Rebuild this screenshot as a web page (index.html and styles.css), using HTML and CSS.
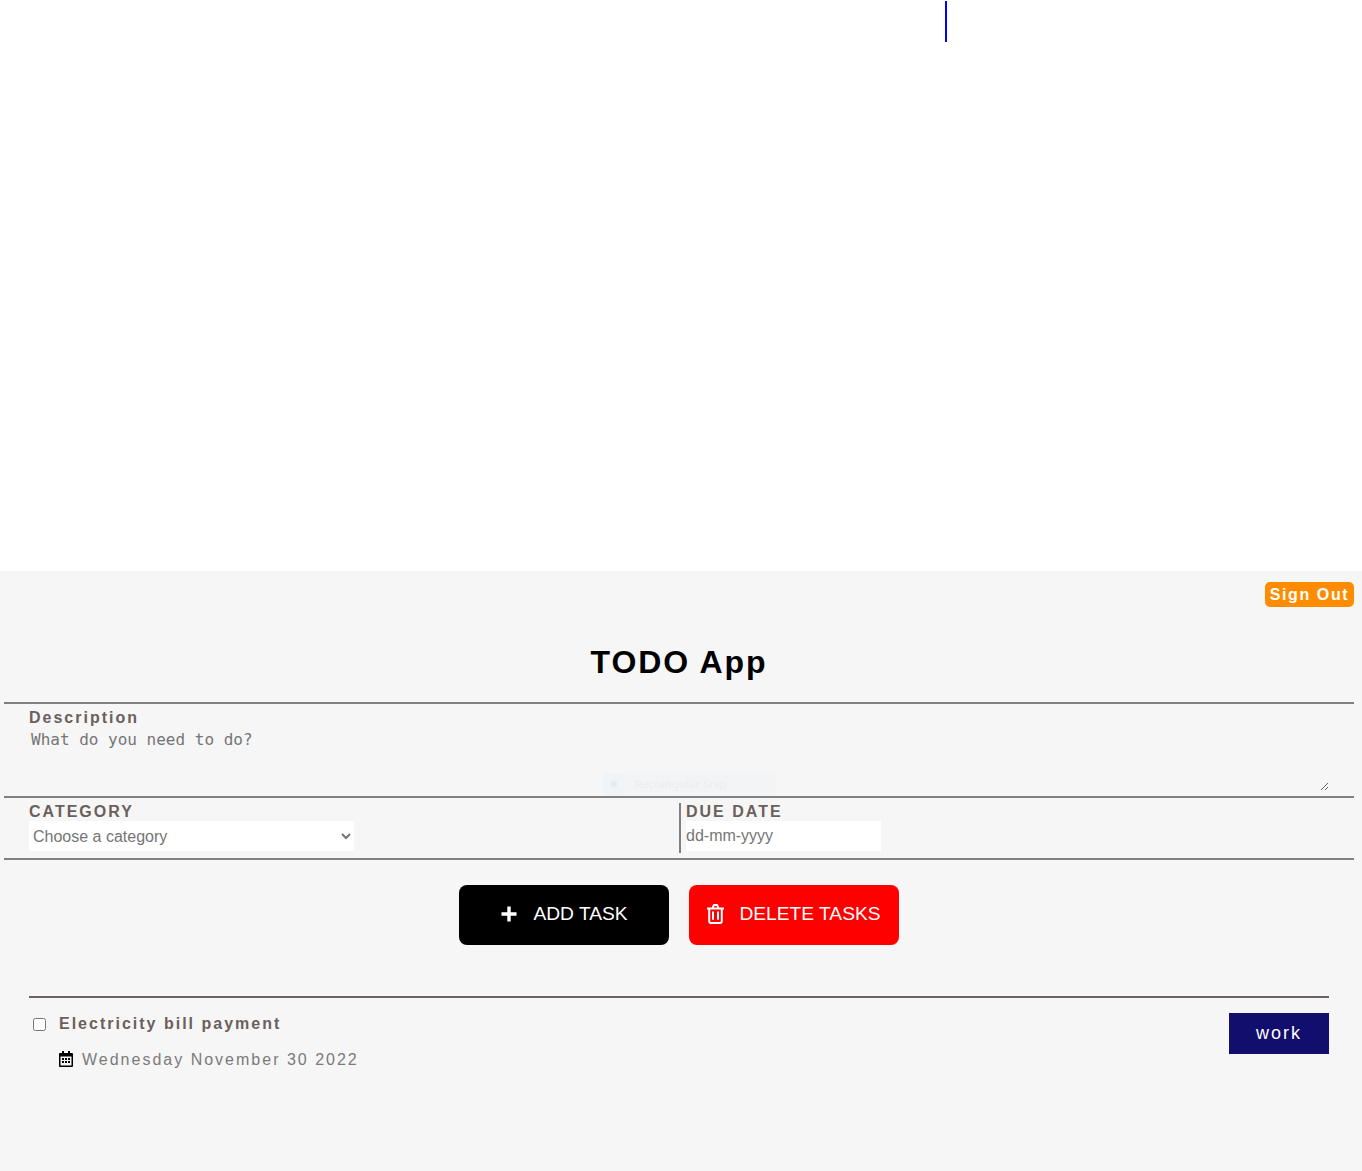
FILE: index.html
```html
<!DOCTYPE html>
<html lang="en">
<head>
    <meta charset="UTF-8">
    <meta name="viewport" content="width=device-width, initial-scale=1.0">
    <title>TODO App</title>
    <link rel="stylesheet" href="styles.css">
</head>
<body>
    <!-- empty area above the app -->
    <div class="blank-area">
        <div class="caret-line"></div>
    </div>

    <div class="app">
        <div class="top-bar">
            <button class="signout-btn">Sign Out</button>
        </div>

        <h1 class="app-title">TODO App</h1>

        <div class="field description-field">
            <label class="field-label">Description</label>
            <textarea class="description-input" placeholder="What do you need to do?"></textarea>
            <div class="snip-ghost">
                <span class="snip-icon"><span class="snip-dot"></span></span>
                <span class="snip-text">Rectangular Snip</span>
            </div>
        </div>

        <div class="field-row">
            <div class="category-field">
                <label class="field-label upper">Category</label>
                <select class="category-select">
                    <option>Choose a category</option>
                    <option>work</option>
                </select>
            </div>
            <div class="date-field">
                <label class="field-label upper">Due Date</label>
                <div class="date-input">dd-mm-yyyy</div>
            </div>
        </div>

        <div class="actions">
            <button class="action-btn add-btn">
                <svg width="18" height="18" viewBox="0 0 18 18"><path d="M7.3 1.5h3.4v5.8h5.8v3.4h-5.8v5.8H7.3v-5.8H1.5V7.3h5.8z" fill="currentColor"/></svg>
                <span>ADD TASK</span>
            </button>
            <button class="action-btn delete-btn">
                <svg width="17" height="20" viewBox="0 0 17 20" fill="none" stroke="currentColor" stroke-width="2">
                    <path d="M0 4.4h17M2.2 4.4v12.9a1.8 1.8 0 0 0 1.8 1.8h9a1.8 1.8 0 0 0 1.8-1.8V4.4M5.4 4.4l1.1-2.6a1.2 1.2 0 0 1 1-.9h2a1.2 1.2 0 0 1 1 .9l1.1 2.6M6 7.6v8.2M11 7.6v8.2"/>
                </svg>
                <span>DELETE TASKS</span>
            </button>
        </div>

        <div class="task-list">
            <div class="task">
                <div class="task-main">
                    <div class="task-title-row">
                        <input type="checkbox" class="task-check">
                        <span class="task-title">Electricity bill payment</span>
                    </div>
                    <div class="task-date">
                        <svg class="task-date-icon" width="14" height="16" viewBox="0 0 14 16">
                            <path d="M3 0h2v2h4V0h2v2h2a1 1 0 0 1 1 1v12a1 1 0 0 1-1 1H1a1 1 0 0 1-1-1V3a1 1 0 0 1 1-1h2z" fill="#000"/>
                            <rect x="1.5" y="5.5" width="11" height="9" fill="#f6f6f6"/>
                            <path d="M3 7h2v2H3zM6 7h2v2H6zM9 7h2v2H9zM3 10h2v2H3zM6 10h2v2H6zM9 10h2v2H9z" fill="#000"/>
                        </svg>
                        <span>Wednesday November 30 2022</span>
                    </div>
                </div>
                <span class="task-badge">work</span>
            </div>
        </div>
    </div>
</body>
</html>
```

FILE: styles.css
```css
:root {
    --text-muted: #6b5f5b;
    --line: #808080;
    --bg-app: #f6f6f6;
}

* {
    box-sizing: border-box;
}

body {
    margin: 0;
    background: #fff;
    font-family: "Liberation Sans", Arial, sans-serif;
}

/* area above the app */
.blank-area {
    height: 571px;
    padding: 1px 0 0 945px;
}

.caret-line {
    width: 2px;
    height: 41px;
    background: #0000ff;
}

.app {
    height: 600px;
    padding: 0 8px 0 4px;
    background: var(--bg-app);
}

.top-bar {
    display: flex;
    justify-content: flex-end;
    padding-top: 11px;
}

.signout-btn {
    width: 89px;
    height: 25px;
    padding: 0;
    border: none;
    border-radius: 5px;
    background: #ff8c00;
    color: #fff;
    font-family: inherit;
    font-size: 16px;
    font-weight: 700;
    letter-spacing: 1.6px;
}

.app-title {
    margin: 0;
    padding-top: 37px;
    height: 97px;
    border-bottom: 2px solid var(--line);
    color: #000;
    font-size: 32px;
    line-height: 37px;
    font-weight: 700;
    letter-spacing: 1.9px;
    text-align: center;
}

.field-label {
    display: block;
    color: var(--text-muted);
    font-size: 16px;
    line-height: 18px;
    font-weight: 700;
    letter-spacing: 2px;
}

.field-label.upper {
    text-transform: uppercase;
}

/* 描述 */
.description-field {
    position: relative;
    height: 94px;
    padding: 5px 25px 0;
    border-bottom: 2px solid var(--line);
}

.description-input {
    display: block;
    width: 1300px;
    height: 64px;
    padding: 4px 2px 0;
    border: none;
    outline: none;
    background: transparent;
    font-family: "DejaVu Sans Mono", monospace;
    font-size: 16px;
    line-height: 18px;
}

.description-input::placeholder {
    color: #757575;
}

.snip-ghost {
    position: absolute;
    left: 599px;
    top: 69px;
    display: flex;
    width: 173px;
    height: 22px;
    background: #f3f4f6;
}

.snip-icon {
    display: flex;
    align-items: center;
    justify-content: center;
    width: 22px;
    background: #f0f4f8;
}

.snip-dot {
    width: 6px;
    height: 6px;
    border-radius: 50%;
    background: #e8e9ea;
}

.snip-text {
    padding-left: 10px;
    color: #ecedee;
    font-family: "Noto Sans", sans-serif;
    font-size: 11.5px;
    line-height: 22px;
}

.field-row {
    display: grid;
    grid-template-columns: 650px 1fr;
    height: 62px;
    padding: 5px 0 0 25px;
    border-bottom: 2px solid var(--line);
}

.category-select {
    display: block;
    width: 325px;
    height: 30px;
    border: none;
    outline: none;
    background: #fff;
    color: #757575;
    font-family: inherit;
    font-size: 16px;
}

.date-field {
    height: 50px;
    padding-left: 5px;
    border-left: 2px solid var(--line);
}

.date-input {
    width: 195px;
    height: 30px;
    background: #fff;
    color: #757575;
    font-size: 16px;
    line-height: 30px;
}

/* 按钮 */
.actions {
    display: flex;
    justify-content: center;
    gap: 20px;
    padding-top: 25px;
}

.action-btn {
    display: flex;
    align-items: center;
    justify-content: center;
    gap: 15px;
    width: 210px;
    height: 60px;
    padding: 0 0 2px;
    border: none;
    border-radius: 8px;
    color: #fff;
    font-family: inherit;
    font-size: 19.2px;
}

.add-btn {
    background: #000;
}

.delete-btn {
    background: #f00;
}

/* 任务列表 */
.task-list {
    margin: 51px 25px 0;
    border-top: 2px solid #6b6363;
}

.task {
    display: flex;
    justify-content: space-between;
    padding-top: 15px;
}

.task-title-row {
    display: flex;
    align-items: center;
    height: 21px;
}

.task-check {
    width: 13px;
    height: 13px;
    margin: 2px 13px 0 4px;
}

.task-title {
    color: var(--text-muted);
    font-size: 16px;
    font-weight: 700;
    letter-spacing: 2px;
}

.task-date {
    display: flex;
    align-items: center;
    gap: 9px;
    margin: 17px 0 0 30px;
    color: #7a7a7a;
    font-size: 16px;
    letter-spacing: 2px;
}

.task-date-icon {
    margin-bottom: 2px;
}

.task-badge {
    width: 100px;
    height: 41px;
    background: #120e6e;
    color: #fff;
    font-size: 18px;
    line-height: 41px;
    letter-spacing: 2px;
    text-align: center;
}
```
